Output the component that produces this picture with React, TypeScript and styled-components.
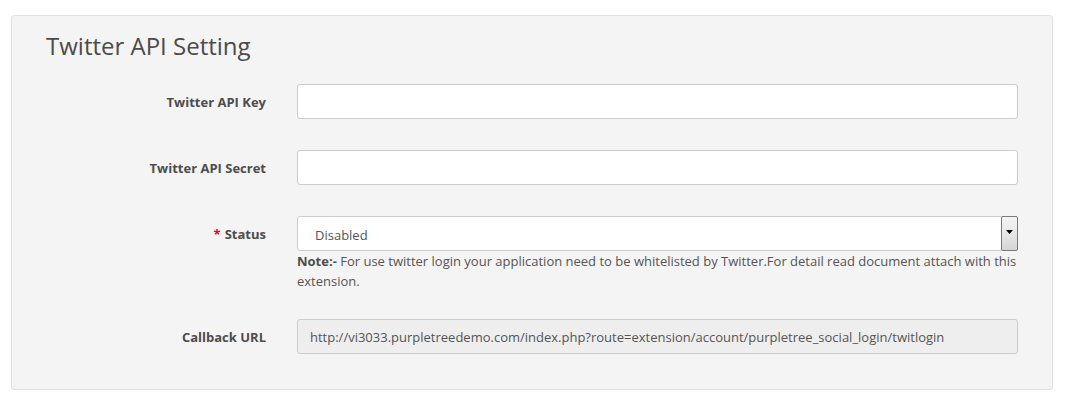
import styled, { createGlobalStyle } from "styled-components";

const GlobalStyle = createGlobalStyle`
  html, body {
    margin: 0;
    padding: 0;
    background: #fff;
    font-family: "Open Sans", "Liberation Sans", sans-serif;
    font-size: 13px;
    color: #555;
  }
`;

const Panel = styled.div`
  margin: 15px 12px 0 11px;
  height: 375px;
  box-sizing: border-box;
  background: #f4f4f4;
  border: 1px solid #e1e1e1;
  border-radius: 3px;
  padding: 17px 34px 0 0;
`;

const Title = styled.h3`
  margin: 0 0 25px 34px;
  font-size: 24px;
  font-weight: 400;
  line-height: 1.1;
  color: #4b4b4b;
`;

const FormGroup = styled.div<{ $gap?: number }>`
  display: grid;
  grid-template-columns: 254px 1fr;
  column-gap: 31px;
  align-items: start;
  margin-bottom: ${(p) => p.$gap ?? 31}px;
`;

const Label = styled.label`
  height: 35px;
  display: flex;
  align-items: center;
  justify-content: flex-end;
  font-weight: 700;
  font-size: 13px;
  color: #4d4d4d;
`;

const Required = styled.span`
  color: #f00;
  margin-right: 4px;
`;

const Field = styled.div`
  display: flex;
  flex-direction: column;
`;

const TextInput = styled.input`
  box-sizing: border-box;
  height: 35px;
  width: 100%;
  padding: 6px 12px;
  font: inherit;
  font-size: 13px;
  color: #555;
  background: ${(p) => (p.readOnly ? "#eee" : "#fff")};
  border: 1px solid #ccc;
  border-radius: 3px;
  outline: none;
`;

const SelectBox = styled.div`
  box-sizing: border-box;
  height: 35px;
  display: flex;
  align-items: stretch;
  background: #fff;
  border: 1px solid #ccc;
  border-radius: 3px;
`;

const SelectValue = styled.span`
  flex: 1;
  display: flex;
  align-items: center;
  padding-left: 17px;
  padding-top: 2px;
  color: #555;
`;

const DropButton = styled.span`
  width: 17px;
  margin: -1px -1px -1px 0;
  box-sizing: border-box;
  border: 1px solid #7a7a7a;
  border-radius: 2px;
  background: linear-gradient(#f4f4f4, #e6e6e6 55%, #d4d4d4);
  display: flex;
  align-items: center;
  justify-content: center;
  padding-bottom: 3px;
`;

const Help = styled.div`
  line-height: 20px;
  color: #555;
  b {
    color: #4d4d4d;
  }
`;

export default function App() {
  return (
    <>
      <GlobalStyle />
      <Panel>
        <Title>Twitter API Setting</Title>
        <FormGroup>
          <Label>Twitter API Key</Label>
          <Field>
            <TextInput type="text" />
          </Field>
        </FormGroup>
        <FormGroup>
          <Label>Twitter API Secret</Label>
          <Field>
            <TextInput type="text" />
          </Field>
        </FormGroup>
        <FormGroup $gap={28}>
          <Label>
            <Required>*</Required>Status
          </Label>
          <Field>
            <SelectBox>
              <SelectValue>Disabled</SelectValue>
              <DropButton>
                <svg width="7" height="4" viewBox="0 0 7 4">
                  <path d="M0 0h7L3.5 4z" fill="#000" />
                </svg>
              </DropButton>
            </SelectBox>
            <Help>
              <b>Note:-</b> For use twitter login your application need to be
              whitelisted by Twitter.For detail read document attach with this
              extension.
            </Help>
          </Field>
        </FormGroup>
        <FormGroup>
          <Label>Callback URL</Label>
          <Field>
            <TextInput
              type="text"
              readOnly
              value="http://vi3033.purpletreedemo.com/index.php?route=extension/account/purpletree_social_login/twitlogin"
            />
          </Field>
        </FormGroup>
      </Panel>
    </>
  );
}
